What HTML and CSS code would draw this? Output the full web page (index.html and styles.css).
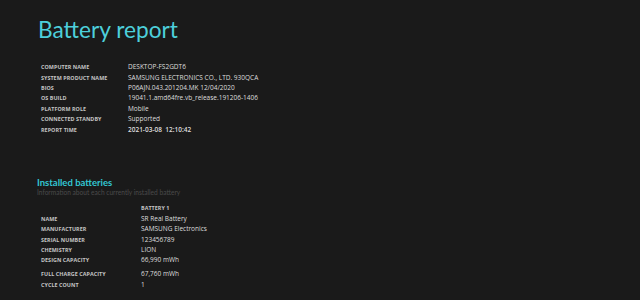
FILE: index.html
```html
<!DOCTYPE html>
<html>
<head>
<meta charset="utf-8">
<link rel="stylesheet" href="styles.css">
</head>
<body>
<main class="report">
  <h1 class="title">Battery report</h1>
  <div class="info">
    <div class="label">Computer name</div><div class="value">DESKTOP-FS2GDT6</div>
    <div class="label">System product name</div><div class="value">SAMSUNG ELECTRONICS CO., LTD. 930QCA</div>
    <div class="label">BIOS</div><div class="value">P06AJN.043.201204.MK 12/04/2020</div>
    <div class="label">OS build</div><div class="value">19041.1.amd64fre.vb_release.191206-1406</div>
    <div class="label">Platform role</div><div class="value">Mobile</div>
    <div class="label">Connected standby</div><div class="value">Supported</div>
    <div class="label">Report time</div><div class="value dt">2021-03-08&nbsp;&nbsp;12:10:42</div>
  </div>

  <h2 class="section">Installed batteries</h2>
  <div class="subtitle">Information about each currently installed battery</div>

  <div class="batteries">
    <div class="label"></div><div class="label">Battery 1</div>
    <div class="label">Name</div><div class="value">SR Real Battery</div>
    <div class="label">Manufacturer</div><div class="value">SAMSUNG Electronics</div>
    <div class="label">Serial number</div><div class="value">123456789</div>
    <div class="label">Chemistry</div><div class="value">LION</div>
    <div class="label">Design capacity</div><div class="value">66,990 mWh</div>
    <div class="label gap">Full charge capacity</div><div class="value gap">67,760 mWh</div>
    <div class="label">Cycle count</div><div class="value">1</div>
  </div>
</main>
</body>
</html>
```

FILE: styles.css
```css
html, body {
  margin: 0;
  padding: 0;
  background: #1a1a1a;
}
body {
  font-family: "Open Sans", "Noto Sans", sans-serif;
  color: #e6e6e6;
}
.report {
  padding: 12px 0 0 37px;
}
.title {
  margin: 0;
  font-family: "Lato", "Open Sans", sans-serif;
  font-weight: 400;
  font-size: 22.7px;
  line-height: 36px;
  color: #4dcfdb;
  padding-left: 1px;
}
.info, .batteries {
  display: grid;
  grid-auto-rows: 10.4px;
  align-items: center;
  padding-left: 4px;
}
.info {
  grid-template-columns: 87px auto;
  margin-top: 14px;
}
.batteries {
  grid-template-columns: 100px auto;
  grid-template-rows: repeat(6, 10.4px) 13.8px 10.4px;
  margin-top: 7.5px;
}
.label {
  font-size: 5.4px;
  font-weight: 700;
  text-transform: uppercase;
  color: #c4c4c4;
  letter-spacing: 0.05px;
  line-height: 10px;
}
.value {
  font-size: 6.5px;
  color: #dedede;
  line-height: 10px;
}
.dt {
  font-weight: 600;
}
.gap {
  align-self: end;
}
.section {
  margin: 42px 0 0 0;
  font-family: "Lato", "Open Sans", sans-serif;
  font-size: 9.5px;
  font-weight: 700;
  line-height: 11px;
  color: #33c6d2;
}
.subtitle {
  font-family: "Lato", "Open Sans", sans-serif;
  font-size: 6.6px;
  line-height: 8px;
  color: #4a4a4a;
}
```
